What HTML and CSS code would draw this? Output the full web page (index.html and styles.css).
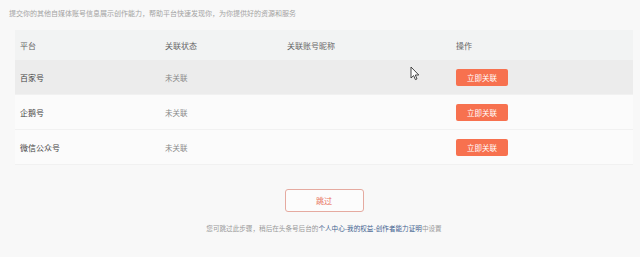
FILE: index.html
```html
<!DOCTYPE html>
<html lang="zh">
<head>
<meta charset="utf-8">
<link rel="stylesheet" href="styles.css">
</head>
<body>
<div class="page">
  <p class="intro">提交你的其他自媒体账号信息展示创作能力，帮助平台快速发现你，为你提供好的资源和服务</p>
  <div class="table">
    <div class="row head">
      <div class="c1">平台</div><div class="c2">关联状态</div><div class="c3">关联账号昵称</div><div class="c4">操作</div>
    </div>
    <div class="row hover">
      <div class="c1 name">百家号</div><div class="c2 status">未关联</div><div class="c3"></div><div class="c4"><button class="link-btn">立即关联</button></div>
    </div>
    <div class="row">
      <div class="c1 name">企鹅号</div><div class="c2 status">未关联</div><div class="c3"></div><div class="c4"><button class="link-btn">立即关联</button></div>
    </div>
    <div class="row">
      <div class="c1 name">微信公众号</div><div class="c2 status">未关联</div><div class="c3"></div><div class="c4"><button class="link-btn">立即关联</button></div>
    </div>
  </div>
  <div class="footer">
    <button class="skip">跳过</button>
    <p class="note">您可跳过此步骤，稍后在头条号后台的<span class="path">个人中心-我的权益-创作者能力证明</span>中设置</p>
  </div>
  <svg class="cursor" width="10" height="15" viewBox="0 0 10 15"><path d="M1 1 L1 12 L3.6 9.6 L5.4 13.6 L7 12.9 L5.3 9 L8.8 9 Z" fill="#fff" stroke="#333" stroke-width="0.9" stroke-linejoin="round"/></svg>
</div>
</body>
</html>
```
FILE: styles.css
```css
html, body {
  margin: 0;
  padding: 0;
  background: #f8f8f8;
}
body {
  font-family: "Noto Sans CJK SC", "Liberation Sans", sans-serif;
  width: 640px;
  height: 257px;
  overflow: hidden;
}
.page {
  position: relative;
  padding: 8px 7px 0 15px;
}
.intro {
  margin: 0 0 0 -6px;
  font-size: 7px;
  line-height: 10px;
  color: #a3a3a3;
}
.table {
  margin-top: 12px;
  width: 618px;
}
.row {
  display: grid;
  grid-template-columns: 145px 122px 169px 1fr;
  align-items: center;
  height: 35px;
  padding-left: 5px;
  font-size: 8px;
  background: #fbfbfb;
  border-bottom: 1px solid #f1f1f1;
  box-sizing: border-box;
}
.row.head {
  height: 30px;
  background: #f2f3f3;
  color: #666;
  border-bottom: 0;
}
.row.hover {
  background: #ececec;
}
.name {
  color: #444;
}
.status {
  color: #888;
  font-size: 7.5px;
}
.link-btn {
  border: 0;
  border-radius: 2px;
  background: #f7714f;
  color: #fff;
  font-family: inherit;
  font-size: 7.5px;
  width: 52px;
  height: 17px;
  padding: 0;
}
.footer {
  display: flex;
  flex-direction: column;
  align-items: center;
  margin-top: 24px;
  width: 618px;
}
.skip {
  width: 79px;
  height: 23px;
  border: 1px solid #e5aaa0;
  border-radius: 3px;
  background: #fcfcfc;
  color: #e8725f;
  font-family: inherit;
  font-size: 8px;
  padding: 0;
}
.note {
  margin: 11px 0 0;
  font-size: 6.6px;
  line-height: 10px;
  color: #999;
}
.path {
  color: #3f5f8f;
}
.cursor {
  position: absolute;
  left: 410px;
  top: 66px;
}
```
